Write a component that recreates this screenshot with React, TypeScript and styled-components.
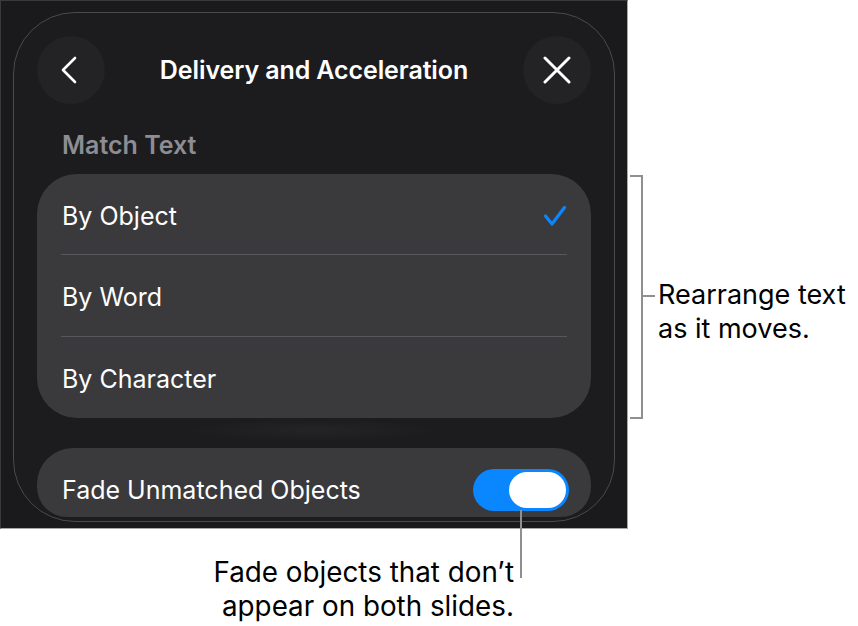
import React from "react";
import styled, { createGlobalStyle } from "styled-components";

const Global = createGlobalStyle`
  html, body { margin: 0; padding: 0; background: #ffffff; }
  body { font-family: Inter, "Noto Sans", sans-serif; -webkit-font-smoothing: antialiased; }
`;

const Page = styled.div`
  width: 858px;
  height: 626px;
  display: grid;
  grid-template-columns: 628px 1fr;
  grid-template-rows: 529px 1fr;
  overflow: hidden;
`;

const Frame = styled.div`
  box-sizing: border-box;
  width: 628px;
  height: 529px;
  background: #1a1a1c;
  border-top: 1px solid #3a3a3c;
  border-left: 1px solid #3a3a3c;
  border-right: 1px solid #a8a8a8;
  border-bottom: 1px solid #a8a8a8;
  padding: 11px 12px 0 12px;
  overflow: hidden;
`;

const Panel = styled.div`
  box-sizing: border-box;
  height: 510px;
  background: #1c1c1e;
  border: 1.5px solid #4a4a4d;
  border-radius: 62px;
  padding: 23px 23px 0 23px;
  display: flex;
  flex-direction: column;
`;

const Header = styled.div`
  display: flex;
  align-items: center;
  height: 68px;
`;

const RoundButton = styled.button`
  width: 68px;
  height: 68px;
  border-radius: 50%;
  border: none;
  background: #232325;
  display: flex;
  align-items: center;
  justify-content: center;
  padding: 0;
  flex: none;
`;

const Title = styled.div`
  flex: 1;
  text-align: center;
  color: #ffffff;
  font-size: 25px;
  font-weight: 600;
  letter-spacing: -0.1px;
`;

const SectionLabel = styled.div`
  margin: 26px 0 0 25px;
  height: 44px;
  color: #8d8d93;
  font-size: 25px;
  font-weight: 600;
  line-height: 30px;
`;

const Card = styled.div`
  background: #3a3a3c;
  border-radius: 40px;
  display: flex;
  flex-direction: column;
`;

const Row = styled.div<{ $h?: number; $offset?: number }>`
  box-sizing: border-box;
  height: ${(p) => p.$h ?? 81}px;
  flex: none;
  display: flex;
  align-items: center;
  justify-content: space-between;
  padding: ${(p) => p.$offset ?? 0}px 24px 0 25px;
  color: #ffffff;
  font-size: 25px;
  font-weight: 400;
`;

const Separator = styled.div`
  height: 1px;
  margin: 0 24px;
  background: #58585c;
`;

const Glow = styled.div`
  height: 30px;
  flex: none;
  background: radial-gradient(ellipse 130px 12px at 50% 40%, rgba(255,255,255,0.035), rgba(255,255,255,0));
`;

const ToggleCard = styled(Card)`
  height: 69px;
  flex: none;
  overflow: hidden;
  border-radius: 36px 36px 30px 30px;
`;

const Toggle = styled.div<{ $on: boolean }>`
  width: 96px;
  height: 42px;
  border-radius: 21px;
  background: ${(p) => (p.$on ? "#0a86ff" : "#5a5a5e")};
  display: flex;
  align-items: center;
  justify-content: ${(p) => (p.$on ? "flex-end" : "flex-start")};
  padding: 0 3px;
  box-sizing: border-box;
  margin-right: -2px;
`;

const Knob = styled.div`
  width: 57px;
  height: 36px;
  border-radius: 18px;
  background: #ffffff;
`;

const RightCallout = styled.div`
  display: flex;
  align-items: flex-start;
  padding-top: 175px;
`;

const Bracket = styled.div`
  box-sizing: border-box;
  margin-left: 2px;
  width: 13px;
  height: 244px;
  border-top: 2px solid #8f8f8f;
  border-right: 2px solid #8f8f8f;
  border-bottom: 2px solid #8f8f8f;
  flex: none;
`;

const TickRow = styled.div`
  display: flex;
  align-items: flex-start;
  margin-top: 104px;
`;

const Tick = styled.div`
  width: 12px;
  height: 2px;
  margin-top: 16px;
  background: #8f8f8f;
  flex: none;
`;

const CalloutText = styled.div<{ $align?: string; $size?: number }>`
  color: #000000;
  font-family: Inter, "Noto Sans", sans-serif;
  font-size: ${(p) => p.$size ?? 27}px;
  line-height: 34px;
  text-align: ${(p) => p.$align ?? "left"};
  white-space: nowrap;
`;

const SideText = styled(CalloutText)`
  margin-left: 3px;
  margin-top: -1px;
`;

const BottomCallout = styled.div`
  grid-column: 1 / 2;
  display: flex;
  justify-content: flex-end;
  align-items: flex-start;
  padding-right: 106px;
`;

const Leader = styled.div`
  position: relative;
  z-index: 2;
  width: 2px;
  height: 68px;
  margin-top: -19px;
  margin-left: 6px;
  background: #8f8f8f;
  flex: none;
`;

const BottomText = styled(CalloutText)`
  margin-top: 26px;
`;

const Chevron = () => (
  <svg width="24" height="30" viewBox="0 0 24 30">
    <path d="M16 3 L4 15 L16 27" fill="none" stroke="#ffffff" strokeWidth="2.6" strokeLinecap="round" strokeLinejoin="round" />
  </svg>
);

const CloseIcon = () => (
  <svg width="28" height="28" viewBox="0 0 28 28">
    <path d="M2 2 L26 26 M26 2 L2 26" fill="none" stroke="#ffffff" strokeWidth="3" strokeLinecap="round" />
  </svg>
);

const Check = () => (
  <svg width="24" height="22" viewBox="0 0 24 22">
    <path d="M2.5 11 L9 19 L21.5 2.5" fill="none" stroke="#0a86ff" strokeWidth="3.2" strokeLinecap="round" strokeLinejoin="round" />
  </svg>
);

const options = ["By Object", "By Word", "By Character"];

export default function App() {
  const selected = 0;
  return (
    <>
      <Global />
      <Page>
        <Frame>
          <Panel>
            <Header>
              <RoundButton aria-label="Back">
                <Chevron />
              </RoundButton>
              <Title>Delivery and Acceleration</Title>
              <RoundButton aria-label="Close">
                <CloseIcon />
              </RoundButton>
            </Header>
            <SectionLabel>Match Text</SectionLabel>
            <Card>
              {options.map((o, i) => (
                <React.Fragment key={o}>
                  {i > 0 && <Separator />}
                  <Row $h={i === 0 ? 80 : 81} $offset={3}>
                    <span>{o}</span>
                    {i === selected && <Check />}
                  </Row>
                </React.Fragment>
              ))}
            </Card>
            <Glow />
            <ToggleCard>
              <Row $h={84}>
                <span>Fade Unmatched Objects</span>
                <Toggle $on>
                  <Knob />
                </Toggle>
              </Row>
            </ToggleCard>
          </Panel>
        </Frame>
        <RightCallout>
          <Bracket />
          <TickRow>
            <Tick />
            <SideText>
              Rearrange text
              <br />
              as it moves.
            </SideText>
          </TickRow>
        </RightCallout>
        <BottomCallout>
          <BottomText $align="right" $size={27.8}>
            Fade objects that don’t
            <br />
            appear on both slides.
          </BottomText>
          <Leader />
        </BottomCallout>
      </Page>
    </>
  );
}
